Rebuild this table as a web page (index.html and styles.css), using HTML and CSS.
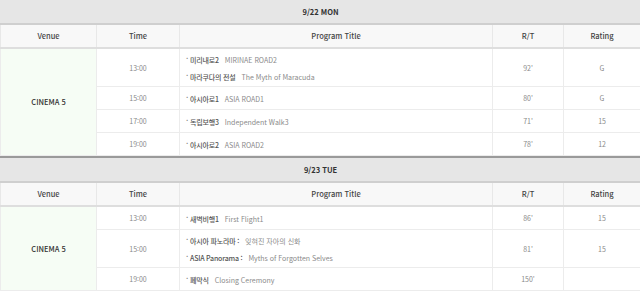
FILE: index.html
```html
<!DOCTYPE html>
<html lang="ko">
<head>
<meta charset="utf-8">
<title>Schedule</title>
<link rel="stylesheet" href="styles.css">
</head>
<body>
<div class="schedule">
  <table class="day day-first">
    <colgroup>
      <col class="c-venue"><col class="c-time"><col class="c-title"><col class="c-rt"><col class="c-rating">
    </colgroup>
    <thead>
      <tr class="date-row"><th colspan="5">9/22 MON</th></tr>
      <tr class="head-row"><th>Venue</th><th>Time</th><th>Program Title</th><th>R/T</th><th>Rating</th></tr>
    </thead>
    <tbody>
      <tr class="two">
        <td class="venue" rowspan="4">CINEMA 5</td>
        <td>13:00</td>
        <td class="title">
          <p><span class="dot">·</span><b>미리내로2</b><span class="en">MIRINAE ROAD2</span></p>
          <p><span class="dot">·</span><b>마라쿠다의 전설</b><span class="en">The Myth of Maracuda</span></p>
        </td>
        <td>92'</td><td>G</td>
      </tr>
      <tr>
        <td>15:00</td>
        <td class="title"><p><span class="dot">·</span><b>아시아로1</b><span class="en">ASIA ROAD1</span></p></td>
        <td>80'</td><td>G</td>
      </tr>
      <tr>
        <td>17:00</td>
        <td class="title"><p><span class="dot">·</span><b>독립보행3</b><span class="en">Independent Walk3</span></p></td>
        <td>71'</td><td>15</td>
      </tr>
      <tr>
        <td>19:00</td>
        <td class="title"><p><span class="dot">·</span><b>아시아로2</b><span class="en">ASIA ROAD2</span></p></td>
        <td>78'</td><td>12</td>
      </tr>
    </tbody>
  </table>

  <table class="day">
    <colgroup>
      <col class="c-venue"><col class="c-time"><col class="c-title"><col class="c-rt"><col class="c-rating">
    </colgroup>
    <thead>
      <tr class="date-row"><th colspan="5">9/23 TUE</th></tr>
      <tr class="head-row"><th>Venue</th><th>Time</th><th>Program Title</th><th>R/T</th><th>Rating</th></tr>
    </thead>
    <tbody>
      <tr>
        <td class="venue" rowspan="3">CINEMA 5</td>
        <td>13:00</td>
        <td class="title"><p><span class="dot">·</span><b>새벽비행1</b><span class="en">First Flight1</span></p></td>
        <td>86'</td><td>15</td>
      </tr>
      <tr class="two">
        <td>15:00</td>
        <td class="title">
          <p><span class="dot">·</span><b>아시아 파노라마 :</b><span class="en">잊혀진 자아의 신화</span></p>
          <p><span class="dot">·</span><b>ASIA Panorama :</b><span class="en">Myths of Forgotten Selves</span></p>
        </td>
        <td>81'</td><td>15</td>
      </tr>
      <tr>
        <td>19:00</td>
        <td class="title"><p><span class="dot">·</span><b>폐막식</b><span class="en">Closing Ceremony</span></p></td>
        <td>150'</td><td></td>
      </tr>
    </tbody>
  </table>
</div>
</body>
</html>
```

FILE: styles.css
```css
html, body {
  margin: 0;
  padding: 0;
  background: #ffffff;
}

body {
  font-family: "Noto Sans CJK KR", "Noto Sans", sans-serif;
  font-size: 8px;
  color: #888888;
}

.schedule {
  width: 640px;
}

.day {
  width: 640px;
  border-collapse: collapse;
  table-layout: fixed;
  border-top: 2px solid #9a9a9a;
  border-left: 1px solid #e6e6e6;
  border-right: 1px solid #e6e6e6;
  border-bottom: 1px solid #e6e6e6;
}

.day-first {
  border-top: none;
}

.c-venue { width: 96px; }
.c-time { width: 83px; }
.c-title { width: 313px; }
.c-rt { width: 71px; }
.c-rating { width: 77px; }

th, td {
  padding: 0;
  text-align: center;
  vertical-align: middle;
  line-height: 14px;
}

.date-row th {
  height: 23px;
  background: #e6e6e6;
  color: #333333;
  font-weight: 700;
  font-size: 7.5px;
  border-bottom: 2px solid #cfcfcf;
}

.head-row th {
  height: 22px;
  background: #f8f8f8;
  color: #444444;
  font-weight: 500;
  font-size: 7.5px;
  border-bottom: 2px solid #dedede;
  border-left: 1px solid #e8e8e8;
}

tbody td {
  height: 22px;
  border-left: 1px solid #ececec;
  border-bottom: 1px solid #ececec;
  color: #8a8a8a;
  font-size: 7px;
  font-weight: 400;
}

tbody tr.two td {
  height: 37px;
}

td.venue {
  background: #f6fdf5;
  color: #333333;
  font-size: 7.5px;
  font-weight: 500;
}

td.title {
  text-align: left;
  padding-left: 6px;
}

td.title p {
  margin: 0;
  line-height: 14px;
}

.two td.title p + p {
  margin-top: 1px;
}

.dot {
  display: inline-block;
  width: 4px;
  font-size: 7px;
  font-weight: 700;
  color: #777777;
  vertical-align: 2px;
}

td.title b {
  color: #555555;
  font-weight: 500;
  letter-spacing: -0.2px;
  margin-right: 6px;
}

.en {
  color: #8a8a8a;
}
```
